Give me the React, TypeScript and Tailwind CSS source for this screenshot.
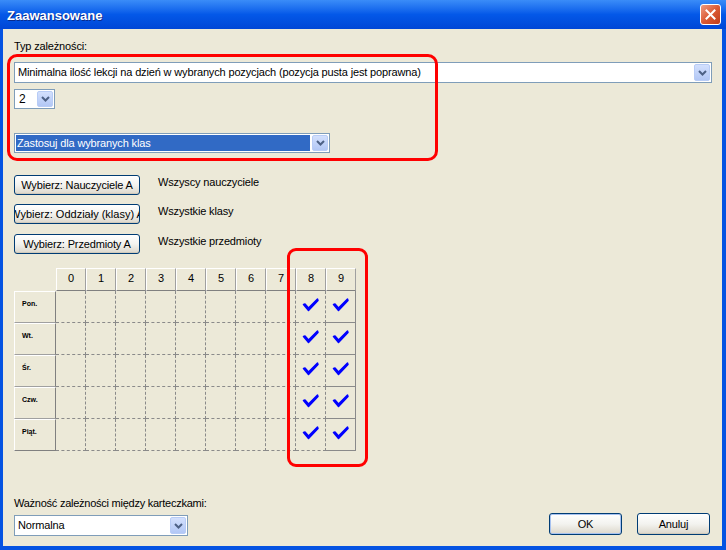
import React from "react";

const Arrow = () => (
  <div className="w-[16px] h-full shrink-0 rounded-[2px] border border-[#B8CCF6] bg-gradient-to-b from-[#D3E0FD] to-[#B2C7F5] flex items-center justify-center">
    <svg width="9" height="6" viewBox="0 0 9 6">
      <path d="M1 1 L4.5 4.5 L8 1" stroke="#4D6185" strokeWidth="2" fill="none" />
    </svg>
  </div>
);

const XPButton = ({ children, className = "", isDefault = false }: { children: React.ReactNode; className?: string; isDefault?: boolean }) => (
  <div
    className={
      "flex items-center justify-center overflow-hidden whitespace-nowrap rounded-[3px] border border-[#003C74] bg-gradient-to-b from-[#FFFFFF] via-[#F3F3EF] to-[#DCD7CB] text-[11px] text-black " +
      (isDefault ? "shadow-[inset_0_0_0_1px_#A7C2F0] " : "shadow-[inset_0_-1px_0_#D0CABC] ") +
      className
    }
  >
    {children}
  </div>
);

const Check = () => (
  <svg width="17" height="14" viewBox="0 0 17 14">
    <path d="M1.5 6.5 L3 6 L6.5 10 L15.5 1 L16 2.5 L6.5 12.5 Z" fill="#0000FF" stroke="#0000FF" strokeWidth="1.5" strokeLinejoin="round" />
  </svg>
);

const days = ["Pon.", "Wt.", "Śr.", "Czw.", "Piąt."];
const cols = [0, 1, 2, 3, 4, 5, 6, 7, 8, 9];

export default function App() {
  return (
    <div className="w-[726px] h-[550px] bg-[#0553E2] flex flex-col font-['Liberation_Sans',Arial,sans-serif] text-black select-none">
      {/* Title bar */}
      <div className="h-[29px] shrink-0 flex items-center pl-[7px] pr-[5px] bg-gradient-to-b from-[#3A8CF8] via-[#0458E8] to-[#0046D6]">
        <div className="flex-1 text-white font-bold text-[13px] leading-[15px] pt-[2px] [text-shadow:1px_1px_0_#0A2A8C]">
          Zaawansowane
        </div>
        <div className="w-[21px] h-[21px] rounded-[3px] border border-white bg-gradient-to-br from-[#EE9A80] via-[#DB5A34] to-[#C03B18] flex items-center justify-center">
          <svg width="11" height="11" viewBox="0 0 11 11">
            <path d="M1.5 1.5 L9.5 9.5 M9.5 1.5 L1.5 9.5" stroke="white" strokeWidth="2" strokeLinecap="square" />
          </svg>
        </div>
      </div>

      {/* Client area */}
      <div className="relative flex-1 ml-[3px] mr-[4px] mb-[4px] bg-[#ECE9D8] flex flex-col pl-[11px] pr-[10px] text-[11px] tracking-[-0.15px]">
        <div className="mt-[11px] h-[13px] leading-[13px]">Typ zależności:</div>

        {/* main combobox */}
        <div className="mt-[9px] h-[21px] flex items-stretch border border-[#7F9DB9] bg-white p-[1px]">
          <div className="flex-1 flex items-center pl-[2px] leading-[13px] whitespace-nowrap overflow-hidden">
            Minimalna ilość lekcji na dzień w wybranych pozycjach (pozycja pusta jest poprawna)
          </div>
          <Arrow />
        </div>

        {/* "2" combobox */}
        <div className="mt-[6px] w-[41px] h-[20px] flex items-stretch border border-[#7F9DB9] bg-white p-[1px]">
          <div className="flex-1 flex items-center pl-[3px] text-[12px]">2</div>
          <Arrow />
        </div>

        {/* third combobox */}
        <div className="mt-[24px] w-[316px] h-[20px] flex items-stretch border border-[#7F9DB9] bg-white p-[1px] gap-[2px]">
          <div className="flex-1 flex items-center pl-[1px] bg-[#316AC5] text-white whitespace-nowrap">
            Zastosuj dla wybranych klas
          </div>
          <Arrow />
        </div>

        {/* buttons with labels */}
        <div className="mt-[22px] flex items-start">
          <XPButton className="w-[126px] h-[20px]">Wybierz: Nauczyciele A</XPButton>
          <div className="ml-[18px] leading-[13px] pt-[1px]">Wszyscy nauczyciele</div>
        </div>
        <div className="mt-[9px] flex items-start">
          <XPButton className="w-[126px] h-[20px] tracking-[0px]">Wybierz: Oddziały (klasy) A</XPButton>
          <div className="ml-[18px] leading-[13px] pt-[1px]">Wszystkie klasy</div>
        </div>
        <div className="mt-[10px] flex items-start">
          <XPButton className="w-[126px] h-[20px]">Wybierz: Przedmioty A</XPButton>
          <div className="ml-[18px] leading-[13px] pt-[1px]">Wszystkie przedmioty</div>
        </div>

        {/* grid */}
        <div className="mt-[14px] flex flex-col tracking-[0px]">
          <div className="flex">
            <div className="w-[42px] shrink-0" />
            {cols.map((c) => (
              <div
                key={c}
                className="w-[30px] h-[23px] shrink-0 flex items-center justify-center pb-[2px] border-t border-l border-t-white border-l-white border-r border-r-[#A0A0A0] border-b border-b-[#808080]"
              >
                {c}
              </div>
            ))}
          </div>
          {days.map((d, ri) => (
            <div key={d} className="flex">
              <div
                className={
                  "w-[42px] h-[32px] shrink-0 border-t border-t-white border-l border-l-white border-r border-r-[#808080] border-b pl-[7px] pt-[7px] text-[7px] font-bold leading-[9px] " +
                  (ri === days.length - 1 ? "border-b-[#808080]" : "border-b-[#A0A0A0]")
                }
              >
                {d}
              </div>
              {cols.map((c) => (
                <div
                  key={c}
                  className={
                    "w-[30px] h-[32px] shrink-0 flex items-center justify-center pb-[3px] " +
                    (c === 9 ? "border-r border-solid border-r-[#8A8A8A] " : "border-r border-dashed border-r-[#8A8A8A] ") +
                    (ri === days.length - 1 ? "border-b border-b-[#8A8A8A]" : "border-b border-dashed border-b-[#8A8A8A]")
                  }
                >
                  {c >= 8 ? <Check /> : null}
                </div>
              ))}
            </div>
          ))}
        </div>

        {/* footer */}
        <div className="mt-auto mb-[10px] flex items-end">
          <div className="flex flex-col">
            <div className="leading-[13px] tracking-[-0.25px]">Ważność zależności między karteczkami:</div>
            <div className="mt-[5px] w-[174px] h-[21px] flex items-stretch border border-[#7F9DB9] bg-white p-[1px]">
              <div className="flex-1 flex items-center pl-[2px]">Normalna</div>
              <Arrow />
            </div>
          </div>
          <div className="ml-auto flex gap-[15px] mb-[1px] pr-[2px]">
            <XPButton className="w-[73px] h-[22px]" isDefault>OK</XPButton>
            <XPButton className="w-[73px] h-[22px]">Anuluj</XPButton>
          </div>
        </div>

        {/* red annotations */}
        <div className="absolute left-[4px] top-[25px] w-[431px] h-[107px] border-[3px] border-[#FF0000] rounded-[10px] pointer-events-none" />
        <div className="absolute left-[284px] top-[219px] w-[81px] h-[219px] border-[3px] border-[#FF0000] rounded-[9px] pointer-events-none" />
      </div>
    </div>
  );
}
